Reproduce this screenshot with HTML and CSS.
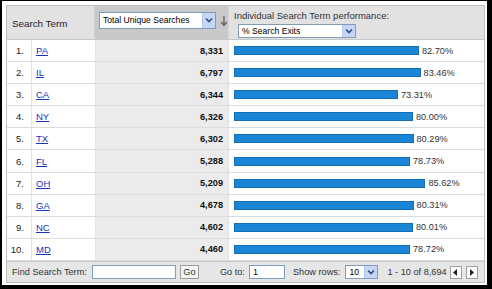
FILE: index.html
```html
<!DOCTYPE html>
<html>
<head>
<meta charset="utf-8">
<link rel="stylesheet" href="styles.css">
</head>
<body>
<div class="frame">
  <div class="report">
    <div class="head">
      <div class="h-term">Search Term</div>
      <div class="h-sum">
        <div class="sel sel-metric"><span class="sel-text">Total Unique Searches</span><span class="sel-btn"><svg width="8" height="6" viewBox="0 0 8 6"><path d="M1 1.5 L4 4.5 L7 1.5" fill="none" stroke="#2b4d8c" stroke-width="1.6"/></svg></span></div>
        <svg class="sort-arrow" width="8" height="12" viewBox="0 0 8 12"><path d="M4 1 V10 M1 7 L4 10.5 L7 7" fill="none" stroke="#666" stroke-width="1.4"/></svg>
      </div>
      <div class="h-perf">
        <div class="perf-label">Individual Search Term performance:</div>
        <div class="sel sel-perf"><span class="sel-text">% Search Exits</span><span class="sel-btn"><svg width="8" height="6" viewBox="0 0 8 6"><path d="M1 1.5 L4 4.5 L7 1.5" fill="none" stroke="#2b4d8c" stroke-width="1.6"/></svg></span></div>
      </div>
    </div>
    <div class="rows">
      <div class="row"><div class="c-num">1.</div><div class="c-term"><a href="#">PA</a></div><div class="c-sum">8,331</div><div class="c-perf"><span class="bar" style="width:184.9px"></span><span class="pct">82.70%</span></div></div>
      <div class="row"><div class="c-num">2.</div><div class="c-term"><a href="#">IL</a></div><div class="c-sum">6,797</div><div class="c-perf"><span class="bar" style="width:186.6px"></span><span class="pct">83.46%</span></div></div>
      <div class="row"><div class="c-num">3.</div><div class="c-term"><a href="#">CA</a></div><div class="c-sum">6,344</div><div class="c-perf"><span class="bar" style="width:163.9px"></span><span class="pct">73.31%</span></div></div>
      <div class="row"><div class="c-num">4.</div><div class="c-term"><a href="#">NY</a></div><div class="c-sum">6,326</div><div class="c-perf"><span class="bar" style="width:178.9px"></span><span class="pct">80.00%</span></div></div>
      <div class="row"><div class="c-num">5.</div><div class="c-term"><a href="#">TX</a></div><div class="c-sum">6,302</div><div class="c-perf"><span class="bar" style="width:179.5px"></span><span class="pct">80.29%</span></div></div>
      <div class="row"><div class="c-num">6.</div><div class="c-term"><a href="#">FL</a></div><div class="c-sum">5,288</div><div class="c-perf"><span class="bar" style="width:176.0px"></span><span class="pct">78.73%</span></div></div>
      <div class="row"><div class="c-num">7.</div><div class="c-term"><a href="#">OH</a></div><div class="c-sum">5,209</div><div class="c-perf"><span class="bar" style="width:191.4px"></span><span class="pct">85.62%</span></div></div>
      <div class="row"><div class="c-num">8.</div><div class="c-term"><a href="#">GA</a></div><div class="c-sum">4,678</div><div class="c-perf"><span class="bar" style="width:179.6px"></span><span class="pct">80.31%</span></div></div>
      <div class="row"><div class="c-num">9.</div><div class="c-term"><a href="#">NC</a></div><div class="c-sum">4,602</div><div class="c-perf"><span class="bar" style="width:178.9px"></span><span class="pct">80.01%</span></div></div>
      <div class="row"><div class="c-num">10.</div><div class="c-term"><a href="#">MD</a></div><div class="c-sum">4,460</div><div class="c-perf"><span class="bar" style="width:176.0px"></span><span class="pct">78.72%</span></div></div>
    </div>
    <div class="foot">
      <span class="f-label">Find Search Term:</span>
      <span class="inp inp-find"></span>
      <span class="btn-go">Go</span>
      <span class="f-label f-goto">Go to:</span>
      <span class="inp inp-goto">1</span>
      <span class="f-label f-rows">Show rows:</span>
      <span class="sel sel-rows"><span class="sel-text">10</span><span class="sel-btn"><svg width="8" height="6" viewBox="0 0 8 6"><path d="M1 1.5 L4 4.5 L7 1.5" fill="none" stroke="#2b4d8c" stroke-width="1.6"/></svg></span></span>
      <span class="f-label f-range">1 - 10 of 8,694</span>
      <span class="pg pg-prev"><svg width="5" height="7" viewBox="0 0 5 7"><path d="M4 0 V7 L0 3.5 Z" fill="#222"/></svg></span>
      <span class="pg pg-next"><svg width="5" height="7" viewBox="0 0 5 7"><path d="M1 0 V7 L5 3.5 Z" fill="#222"/></svg></span>
    </div>
  </div>
</div>
</body>
</html>
```

FILE: styles.css
```css
html, body {
  margin: 0;
  padding: 0;
  background: #000;
  width: 492px;
  height: 289px;
  overflow: hidden;
  font-family: "Liberation Sans", Arial, sans-serif;
  font-size: 9.5px;
  color: #222;
  white-space: nowrap;
}
.frame {
  margin: 1px 0 0 2px;
  width: 485px;
  height: 284px;
  background: #fff;
  box-sizing: border-box;
  padding: 4px 2px 2px 4px;
}
.report {
  width: 479px;
  height: 278px;
  box-sizing: border-box;
  border: 1px solid #bdbdbd;
  display: flex;
  flex-direction: column;
}
.head {
  height: 34px;
  box-sizing: border-box;
  border-bottom: 1px solid #c8c8c8;
  display: grid;
  grid-template-columns: 88px 134px 1fr;
  background: #e2e2e2;
}
.h-term {
  display: flex;
  align-items: center;
  padding-left: 5px;
  padding-top: 2px;
  border-right: 1px solid #d0d0d0;
  color: #222;
  font-size: 9.8px;
}
.h-sum {
  background: #c9c9c9;
  display: flex;
  align-items: center;
  padding-left: 4px;
  padding-bottom: 5px;
  box-sizing: border-box;
  border-right: 1px solid #d6d6d6;
}
.h-perf {
  padding: 4px 0 0 5px;
  color: #333;
}
.perf-label {
  line-height: 11px;
}
.sel {
  display: flex;
  align-items: stretch;
  background: #fff;
  border: 1px solid #7f9db9;
  box-sizing: border-box;
  font-size: 8.6px;
  color: #000;
}
.sel-text {
  flex: 1;
  padding-left: 3px;
  display: flex;
  align-items: center;
}
.sel-btn {
  width: 12px;
  background: #c6d6f6;
  border-left: 1px solid #b3c6ec;
  display: flex;
  align-items: center;
  justify-content: center;
}
.sel-metric {
  width: 118px;
  height: 17px;
}
.sort-arrow {
  margin-left: 4px;
  margin-top: 2px;
}
.sel-perf {
  width: 118px;
  height: 14px;
  margin: 3px 0 0 4px;
}
.rows {
  flex: 1;
  display: flex;
  flex-direction: column;
}
.row {
  flex: 1;
  display: grid;
  grid-template-columns: 25px 63px 134px 1fr;
  border-bottom: 1px solid #dcdcdc;
  box-sizing: border-box;
}
.row > div {
  display: flex;
  align-items: center;
}
.c-num {
  justify-content: flex-end;
  padding-right: 7px;
  border-right: 1px solid #e2e2e2;
  color: #222;
}
.c-term {
  padding-left: 4px;
}
.c-term a {
  color: #1535b8;
  text-decoration: underline;
}
.c-sum {
  background: #ebebeb;
  justify-content: flex-end;
  padding-right: 5px;
  font-weight: bold;
  font-size: 9.2px;
  color: #111;
  border-right: 1px solid #e0e0e0;
  border-left: 1px solid #e4e4e4;
}
.c-perf {
  padding-left: 5px;
}
.bar {
  display: inline-block;
  height: 9px;
  box-sizing: border-box;
  background: #1b86d6;
  border: 1px solid #156fb6;
}
.pct {
  margin-left: 3px;
  color: #333;
  font-size: 9.2px;
}
.foot {
  height: 21px;
  box-sizing: border-box;
  border-top: 1px solid #c8c8c8;
  background: #e6e6e6;
  display: flex;
  align-items: center;
  padding-left: 5px;
  color: #333;
  font-size: 9.2px;
}
.inp {
  display: flex;
  align-items: center;
  height: 14px;
  box-sizing: border-box;
  background: #fff;
  border: 1px solid #7f9db9;
  font-size: 9px;
  color: #111;
  padding-left: 3px;
}
.inp-find {
  width: 84px;
  margin-left: 5px;
}
.btn-go {
  margin-left: 4px;
  width: 19px;
  height: 14px;
  box-sizing: border-box;
  border: 1px solid #9a9a9a;
  background: #f4f4f4;
  display: flex;
  align-items: center;
  justify-content: center;
  color: #333;
}
.f-goto {
  margin-left: 21px;
}
.inp-goto {
  width: 36px;
  margin-left: 4px;
}
.f-rows {
  margin-left: 8px;
}
.sel-rows {
  width: 33px;
  height: 14px;
  margin-left: 5px;
}
.f-range {
  margin-left: 9px;
}
.pg {
  width: 12px;
  height: 13px;
  box-sizing: border-box;
  border: 1px solid #a0a0a0;
  background: #fafafa;
  display: flex;
  align-items: center;
  justify-content: center;
}
.pg-prev {
  margin-left: 3px;
}
.pg-next {
  margin-left: 4px;
}
```
